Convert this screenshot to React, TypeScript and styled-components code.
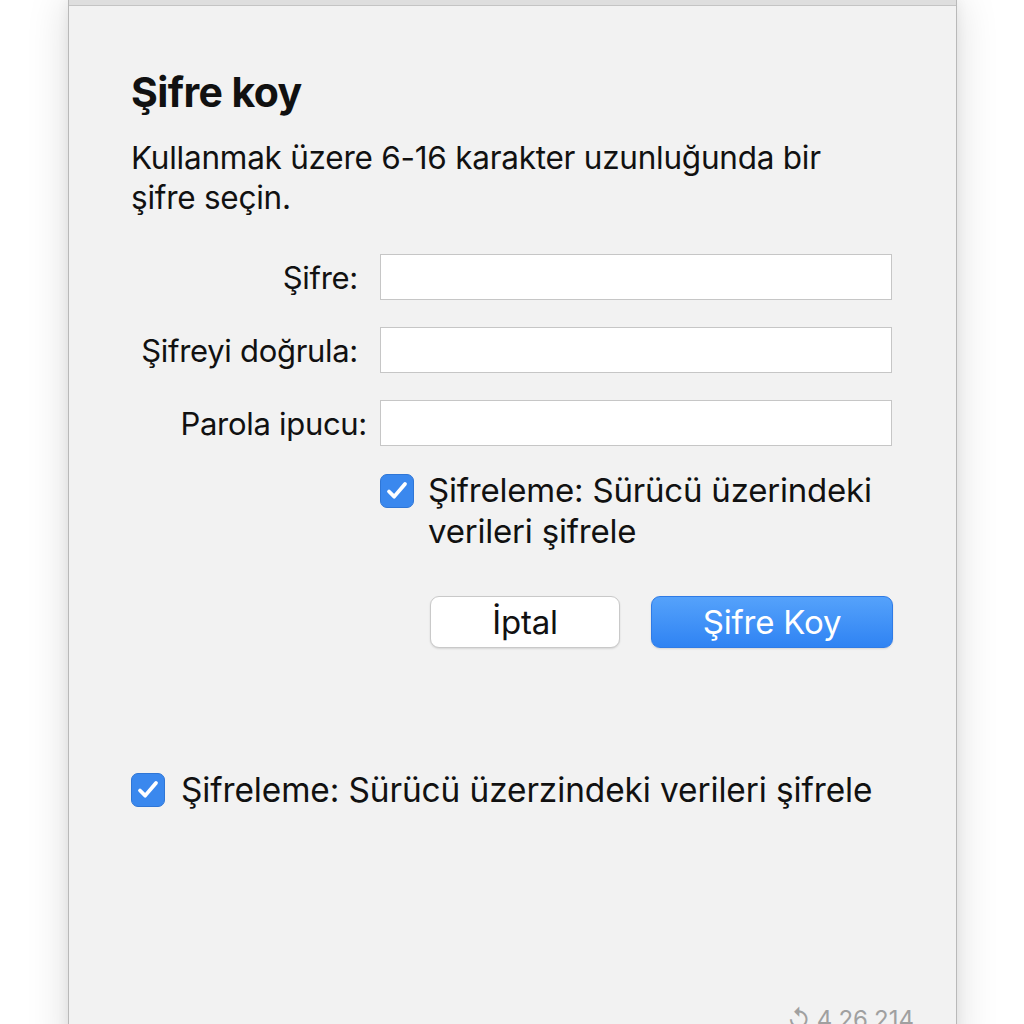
import React from "react";
import styled, { createGlobalStyle } from "styled-components";

const Global = createGlobalStyle`
  html, body { margin: 0; padding: 0; background: #ffffff; }
  body { font-family: Inter, "Noto Sans", "Liberation Sans", sans-serif; color: #111; overflow: hidden; }
  #root { height: 1024px; }
`;

const Page = styled.div`
  height: 1024px;
  display: flex;
  padding-left: 68px;
  background: #ffffff;
  overflow: hidden;
`;

const Window = styled.div`
  width: 889px;
  height: 1060px;
  box-sizing: border-box;
  background: #f2f2f2;
  border-left: 1.5px solid #b9b9b9;
  border-right: 1.5px solid #b9b9b9;
  box-shadow: 0 0 40px rgba(0, 0, 0, 0.14), 0 0 12px rgba(0, 0, 0, 0.06);
  display: flex;
  flex-direction: column;
`;

const TitleBar = styled.div`
  height: 5px;
  background: #dedede;
  border-bottom: 1px solid #c4c4c4;
`;

const Content = styled.div`
  padding: 60px 0 0 62px;
  display: flex;
  flex-direction: column;
  flex: 1;
`;

const Title = styled.h1`
  margin: 0;
  font-size: 41px;
  font-weight: 700;
  letter-spacing: -0.6px;
  line-height: 52px;
`;

const Description = styled.p`
  margin: 20px 0 0;
  font-size: 31.5px;
  line-height: 40px;
  width: 760px;
  letter-spacing: -0.25px;
`;

const Form = styled.div`
  margin-top: 36px;
  display: grid;
  grid-template-columns: 227px 512px;
  column-gap: 22px;
  row-gap: 27px;
  align-items: center;
`;

const Label = styled.label<{ $shift?: number }>`
  justify-self: end;
  font-size: 31px;
  letter-spacing: -0.3px;
  margin-right: ${(p) => -(p.$shift ?? 0)}px;
  white-space: nowrap;
`;

const Input = styled.div`
  height: 46px;
  box-sizing: border-box;
  background: #ffffff;
  border: 1px solid #c6c6c6;
`;

const CheckRow = styled.div`
  grid-column: 2;
  margin-top: -3px;
  display: flex;
  align-items: flex-start;
  gap: 14px;
`;

const Box = styled.span`
  flex: none;
  width: 34px;
  height: 34px;
  box-sizing: border-box;
  border-radius: 7px;
  background: #3a88ee;
  border: 1px solid #2f76d6;
  display: flex;
  align-items: center;
  justify-content: center;
`;

const BoxInRow = styled(Box)`
  margin-top: 4px;
`;

const CheckText = styled.span`
  font-size: 33px;
  line-height: 41px;
  letter-spacing: -0.2px;
  white-space: nowrap;
`;

const Buttons = styled.div`
  grid-column: 2;
  display: flex;
  justify-content: flex-end;
  gap: 31px;
  margin-top: 17px;
  margin-right: -1px;
`;

const Button = styled.button<{ $primary?: boolean; $w: number }>`
  width: ${(p) => p.$w}px;
  height: 52px;
  border-radius: 9px;
  font-family: inherit;
  font-size: 33px;
  letter-spacing: -0.2px;
  padding: 0;
  cursor: default;
  border: 1px solid ${(p) => (p.$primary ? "#2f7be6" : "#c9c9c9")};
  background: ${(p) =>
    p.$primary ? "linear-gradient(#55a2fb, #2f83f3)" : "#ffffff"};
  color: ${(p) => (p.$primary ? "#ffffff" : "#111")};
  box-shadow: 0 1px 2px rgba(0, 0, 0, 0.12);
`;

const BottomCheck = styled.div`
  margin-top: 122px;
  display: flex;
  align-items: center;
  gap: 16px;
`;

const BottomText = styled.span`
  font-size: 33.4px;
  line-height: 40px;
  letter-spacing: -0.1px;
  white-space: nowrap;
`;

const Spacer = styled.div`
  flex: 1;
`;

const Version = styled.div`
  align-self: flex-end;
  margin-right: 42px;
  font-size: 24px;
  color: #a0a0a0;
  margin-bottom: 26px;
`;

const Tick = () => (
  <svg width="34" height="34" viewBox="0 0 34 34">
    <path
      d="M8.5 17.5 L14 23 L25.5 9.5"
      fill="none"
      stroke="#fff"
      strokeWidth="4"
      strokeLinecap="round"
      strokeLinejoin="round"
    />
  </svg>
);

export default function App() {
  return (
    <>
      <Global />
      <Page>
        <Window>
          <TitleBar />
          <Content>
            <Title>Şifre koy</Title>
            <Description>
              Kullanmak üzere 6-16 karakter uzunluğunda bir
              <br />
              şifre seçin.
            </Description>
            <Form>
              <Label>Şifre:</Label>
              <Input />
              <Label>Şifreyi doğrula:</Label>
              <Input />
              <Label $shift={9}>Parola ipucu:</Label>
              <Input />
              <CheckRow>
                <BoxInRow>
                  <Tick />
                </BoxInRow>
                <CheckText>
                  Şifreleme: Sürücü üzerindeki
                  <br />
                  verileri şifrele
                </CheckText>
              </CheckRow>
              <Buttons>
                <Button $w={190}>İptal</Button>
                <Button $w={242} $primary>
                  Şifre Koy
                </Button>
              </Buttons>
            </Form>
            <BottomCheck>
              <Box>
                <Tick />
              </Box>
              <BottomText>Şifreleme: Sürücü üzerzindeki verileri şifrele</BottomText>
            </BottomCheck>
            <Spacer />
            <Version>↺ 4.26.214</Version>
          </Content>
        </Window>
      </Page>
    </>
  );
}
